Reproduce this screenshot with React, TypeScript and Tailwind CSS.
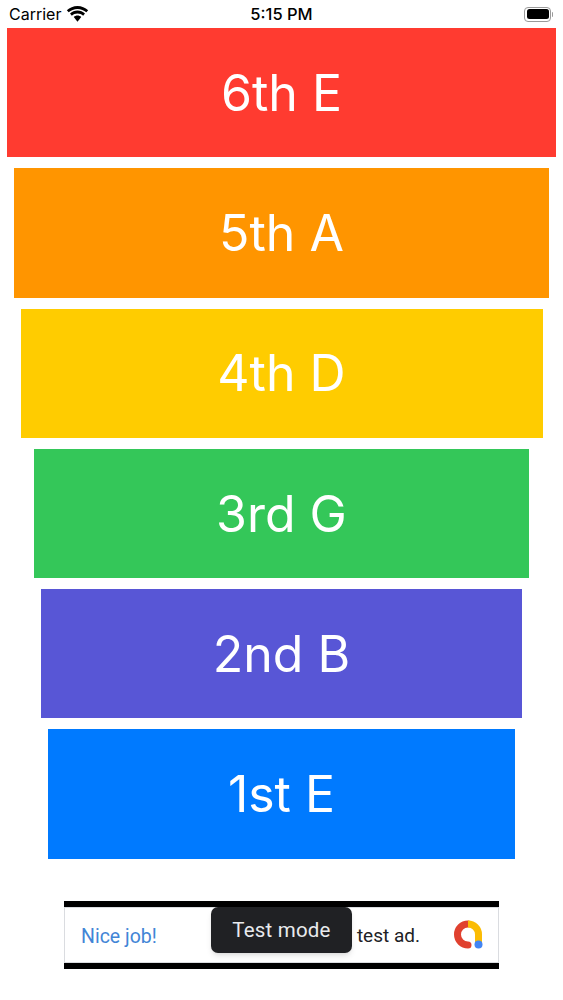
const bars = [
  { label: "6th E", cls: "w-[549px] bg-[#ff3b30]" },
  { label: "5th A", cls: "w-[535px] bg-[#ff9500]" },
  { label: "4th D", cls: "w-[522px] bg-[#ffcc00]" },
  { label: "3rd G", cls: "w-[495px] bg-[#34c759]" },
  { label: "2nd B", cls: "w-[481px] bg-[#5856d6]" },
  { label: "1st E", cls: "w-[467px] bg-[#007aff]" },
];

export default function App() {
  return (
    <div className="w-[563px] h-[1000px] bg-white flex flex-col overflow-hidden font-['Inter',sans-serif]">
      <div className="h-[28px] shrink-0 grid grid-cols-3 items-center px-[9px] text-[16px] text-black">
        <div className="flex items-center gap-[5px]">
          <span>Carrier</span>
          <svg width="23" height="17" viewBox="0 0 20 15" fill="#000" aria-hidden="true">
            <path d="M10 2.600c3 0 5.700 1.100 7.800 3l1.600-1.800C16.900 1.500 13.600 0 10 0S3.100 1.500.6 3.800l1.600 1.800c2.100-1.900 4.800-3 7.800-3z" />
            <path d="M10 6.600c1.900 0 3.600.7 5 1.900l1.600-1.800C14.800 5 12.500 4 10 4S5.200 5 3.400 6.700L5 8.500c1.400-1.200 3.100-1.900 5-1.900z" />
            <path d="M10 8.400c-1.300 0-2.400.5-3.300 1.300L10 14l3.300-4.300C12.400 8.900 11.300 8.400 10 8.400z" />
          </svg>
        </div>
        <div className="text-center font-medium text-[16.500px]">5:15 PM</div>
        <div className="flex justify-end items-center pr-[1px]">
          <div className="w-[27px] h-[15px] rounded-[4px] border border-[#9a9a9a] p-[1.5px]">
            <div className="w-full h-full rounded-[2.500px] bg-black" />
          </div>
          <div className="w-[1.500px] h-[5px] ml-[0.500px] rounded-r-sm bg-[#9a9a9a]" />
        </div>
      </div>

      <div className="flex flex-col items-center gap-[11px]">
        {bars.map((b) => (
          <div
            key={b.label}
            className={`h-[129.300px] flex items-center justify-center text-white text-[50px] pt-[1px] ${b.cls}`}
          >
            {b.label}
          </div>
        ))}
      </div>

      <div className="relative mt-[42px] mx-auto w-[435px] h-[68px] bg-black py-[6px]">
        <div className="h-full bg-white border border-[#dadce0] flex items-center justify-between pl-[16px] pr-[15px] font-['Roboto',sans-serif] text-[19px]">
          <span className="text-[#4285d6] text-[19.500px] pt-[3px]">Nice job!</span>
          <div className="flex items-center gap-[33px]">
            <span className="text-[#202124] pt-[3px]">test ad.</span>
            <svg width="30" height="29" viewBox="0 0 30 29" fill="none" aria-hidden="true">
              <path d="M15 4A10.500 10.500 0 0 0 15 25" stroke="#e0412f" strokeWidth="7" strokeLinecap="round" />
              <path d="M15 4A10.500 10.500 0 0 1 25.500 14.500V24" stroke="#fbbc04" strokeWidth="7" />
              <circle cx="25.500" cy="24.500" r="4" fill="#4285f4" />
            </svg>
          </div>
        </div>
        <div className="absolute left-[147px] top-[6px] w-[141px] h-[46px] rounded-[7px] bg-[#202124] shadow-md flex items-center justify-center pt-[2px] font-['Roboto',sans-serif] text-[20.500px] tracking-[0.2px] text-[#e8eaed]">
          Test mode
        </div>
      </div>
    </div>
  );
}
